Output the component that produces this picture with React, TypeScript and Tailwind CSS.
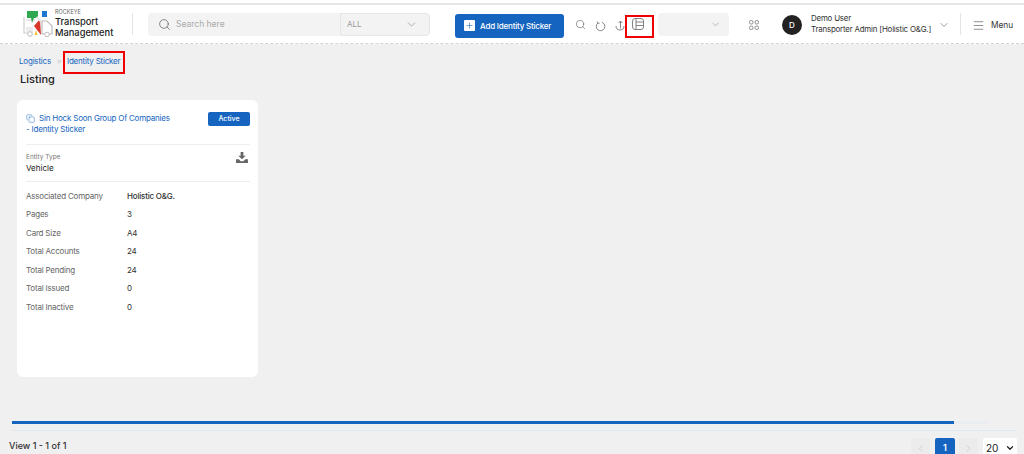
import { ChevronDown, ChevronLeft, ChevronRight, ChevronsRight, Copy, Menu, Plus, Search } from "lucide-react";

const details = [
  { label: "Associated Company", value: "Holistic O&G." },
  { label: "Pages", value: "3" },
  { label: "Card Size", value: "A4" },
  { label: "Total Accounts", value: "24" },
  { label: "Total Pending", value: "24" },
  { label: "Total Issued", value: "0" },
  { label: "Total Inactive", value: "0" },
];

function Logo() {
  return (
    <svg width="30" height="26" viewBox="0 0 30 26" className="mt-[-1px] shrink-0">
      <path d="M1 6v16h5M3 9h9" fill="none" stroke="#cfcfcf" strokeWidth="1.2" />
      <path d="M4 0h11v7h-4l-2 5-1-5H4z" fill="#2fa84f" />
      <rect x="19" y="0" width="5" height="6" fill="#1e78d2" />
      <path d="M17 8l-6 7 7 9z" fill="#d8392b" />
      <path d="M14 5l5 5-2 1-4-4z" fill="#e8e8e8" />
      <path d="M19 10h5l5 5v8H19z" fill="none" stroke="#bdbdbd" strokeWidth="1.2" />
      <path d="M3 16h7v6H3z" fill="#ececec" />
      <circle cx="7" cy="23" r="2.3" fill="#fff" stroke="#bdbdbd" />
      <circle cx="24" cy="23.500" r="2.300" fill="#fff" stroke="#bdbdbd" />
      <path d="M13 19l1.500 5h-3z" fill="#f2c230" />
    </svg>
  );
}

export default function App() {
  return (
    <div className="relative h-[454px] w-[1024px] overflow-hidden bg-[#f0f0f0] font-['Inter',sans-serif] text-[#222]">
      <div className="h-[3px] bg-white" />
      <div className="h-[2px] bg-[#e6e6e6]" />
      <header className="flex h-[39px] items-center border-b border-dashed border-[#d4d4d4] bg-white pl-[23px]">
        <Logo />
        <div className="ml-[2px] w-[60px] shrink-0 leading-none">
          <div className="text-[5.500px] text-[#666]">ROCKEYE</div>
          <div className="mt-[1px] w-[70px] text-[9.300px] leading-[11px] font-medium text-[#222]">Transport Management</div>
        </div>
        <div className="ml-[17px] h-[22px] w-px bg-[#e4e4e4]" />
        <div className="ml-[15px] flex h-[23px] w-[192px] items-center rounded-l bg-[#f3f3f3] pl-[10px]">
          <Search size={13} strokeWidth={1.4} className="text-[#666]" />
          <span className="ml-[5px] text-[8.500px] text-[#aaa]">Search here</span>
        </div>
        <div className="flex h-[23px] w-[90px] items-center justify-between rounded-r border border-[#e6e6e6] bg-[#f3f3f3] pr-[11px] pl-[6px]">
          <span className="text-[8px] text-[#999]">ALL</span>
          <ChevronDown size={13} strokeWidth={1.2} className="text-[#888]" />
        </div>
        <button className="mt-[3px] ml-[25px] flex h-[24px] w-[109px] items-center rounded-[3px] bg-[#1565c0] pl-[9px] text-white">
          <span className="flex h-[11px] w-[11px] items-center justify-center rounded-[1px] bg-white">
            <Plus size={9} strokeWidth={1.5} className="text-[#1565c0]" />
          </span>
          <span className="ml-[5px] text-[8px] font-medium tracking-tight">Add Identity Sticker</span>
        </button>
        <Search size={11} strokeWidth={1.4} className="mt-[1px] ml-[11px] text-[#666]" />
        <svg width="11" height="11" viewBox="0 0 11 11" fill="none" stroke="#777" strokeWidth="0.9" className="mt-[4px] ml-[9px]">
          <path d="M6.800 1.300A4.300 4.300 0 1 1 2.700 2.200" />
          <path d="M2.300 0.600l0.500 1.800 1.800-0.300" />
        </svg>
        <svg width="10" height="11" viewBox="0 0 10 11" fill="none" stroke="#777" strokeWidth="0.9" className="mt-[2px] ml-[9px]">
          <path d="M5.500 1v7.500M3.500 3l2-2 2 2M1 6c0 2.500 1.500 4 4 4s4-1 4-4" />
        </svg>
        <svg width="12" height="12" viewBox="0 0 12 12" fill="none" stroke="#777" strokeWidth="0.9" className="ml-[7px]">
          <rect x="0.500" y="0.500" width="11" height="11" rx="2.500" />
          <path d="M4 0.500v11M4 4h7.500M4 7.500h7.500" />
        </svg>
        <div className="ml-[14px] flex h-[23px] w-[71px] items-center justify-end rounded bg-[#f3f3f3] pr-[8px]">
          <ChevronDown size={11} strokeWidth={1.2} className="text-[#888]" />
        </div>
        <svg width="10" height="10" viewBox="0 0 10 10" fill="none" stroke="#666" strokeWidth="0.7" className="mt-[1px] ml-[20px]">
          <rect x="0.500" y="0.500" width="3.500" height="3.500" rx="1.500" />
          <rect x="6" y="0.500" width="3.500" height="3.500" rx="1.500" />
          <rect x="0.500" y="6" width="3.500" height="3.500" rx="1.500" />
          <rect x="6" y="6" width="3.500" height="3.500" rx="1.500" />
        </svg>
        <div className="mt-[1px] ml-[23px] flex h-[20px] w-[20px] items-center justify-center rounded-full bg-[#222] text-[8px] font-medium text-white">D</div>
        <div className="ml-[9px] w-[127px] text-[7.900px] leading-[11px] tracking-tight text-[#333]">
          <div>Demo User</div>
          <div className="whitespace-nowrap">Transporter Admin [Holistic O&amp;G.]</div>
        </div>
        <ChevronDown size={12} strokeWidth={1.2} className="mt-[1px] text-[#555]" />
        <div className="ml-[10px] h-[22px] w-px bg-[#e4e4e4]" />
        <Menu size={13} strokeWidth={1.2} className="mt-[3px] ml-[11px] text-[#555]" />
        <span className="mt-[3px] ml-[6px] text-[8.300px] text-[#333]">Menu</span>
      </header>

      <main className="pl-[17px]">
        <nav className="mt-[11px] flex h-[12px] items-center pl-[2px] text-[8px] tracking-tight text-[#1565c0]">
          <span>Logistics</span>
          <ChevronsRight size={7} className="ml-[5px] text-[#aaa]" />
          <span className="ml-[4px]">Identity Sticker</span>
        </nav>
        <h1 className="mt-[5px] pl-[3px] text-[11px] leading-[14px] font-medium text-[#222]">Listing</h1>

        <section className="mt-[14px] h-[277px] w-[241px] rounded-[6px] bg-white pr-[8px] pl-[9px]">
          <div className="flex h-[45px] items-start justify-between border-b border-[#eee] pt-[12px]">
            <div className="mt-[1px] w-[170px] text-[8px] leading-[11px] tracking-tight text-[#1565c0]">
              <Copy size={9} strokeWidth={1.2} className="mr-[4px] inline-block" />
              Sin Hock Soon Group Of Companies
              <br />- Identity Sticker
            </div>
            <span className="flex h-[14px] w-[42px] items-center justify-center rounded-[2px] bg-[#1565c0] text-[7px] font-medium text-white">Active</span>
          </div>
          <div className="flex h-[37px] items-start justify-between border-b border-[#eee] pt-[8px]">
            <div>
              <div className="text-[6.500px] leading-[9px] text-[#777]">Entity Type</div>
              <div className="mt-[1px] text-[8px] leading-[10px] text-[#222]">Vehicle</div>
            </div>
            <svg width="12" height="11" viewBox="0 0 13 12" fill="#666" className="mt-[-1px] mr-[2px]">
              <path d="M5 0h3v4h2.500L6.500 8 2.500 4H5z" />
              <path d="M0 8h3l2 2h3l2-2h3v4H0z" />
            </svg>
          </div>
          <div className="flex flex-col gap-[8.500px] pt-[8.500px]">
            {details.map((d) => (
              <div key={d.label} className="flex h-[10px] items-center text-[8px] tracking-tight">
                <span className="w-[101px] text-[#666]">{d.label}</span>
                <span className={d.value.length > 2 ? "font-medium text-[#333]" : "text-[#333]"}>{d.value}</span>
              </div>
            ))}
          </div>
        </section>
      </main>

      <footer className="mt-[44px] pl-[12px]">
        <div className="h-[3px] w-[976px] bg-[#e9edf2]">
          <div className="h-[3px] w-[942px] bg-[#1565c0]" />
        </div>
        <div className="mt-[6px] flex h-[24px] w-[1005px] items-start justify-between border-t border-[#e0e6ee] pt-[7px]">
          <span className="mt-[1px] ml-[-3px] text-[9px] font-medium text-[#333]">View 1 - 1 of 1</span>
          <div className="flex items-center">
            <span className="flex h-[20px] w-[19px] items-center justify-center bg-[#ececec]">
              <ChevronLeft size={11} className="text-[#ccc]" />
            </span>
            <span className="ml-[5px] flex h-[20px] w-[20px] items-center justify-center rounded-[2px] bg-[#1565c0] text-[9px] font-semibold text-white">1</span>
            <span className="ml-[4px] flex h-[20px] w-[19px] items-center justify-center bg-[#ececec]">
              <ChevronRight size={11} className="text-[#ccc]" />
            </span>
            <span className="ml-[5px] flex h-[20px] w-[34px] items-center justify-between rounded-[2px] bg-white pr-[2px] pl-[3px] text-[10px] text-[#222]">
              20
              <ChevronDown size={10} strokeWidth={3} />
            </span>
          </div>
        </div>
      </footer>

      <div className="absolute top-[51px] left-[63px] h-[23px] w-[62px] border-2 border-[#f00000]" />
      <div className="absolute top-[15px] left-[625px] h-[23px] w-[29px] border-2 border-[#f00000]" />
    </div>
  );
}
